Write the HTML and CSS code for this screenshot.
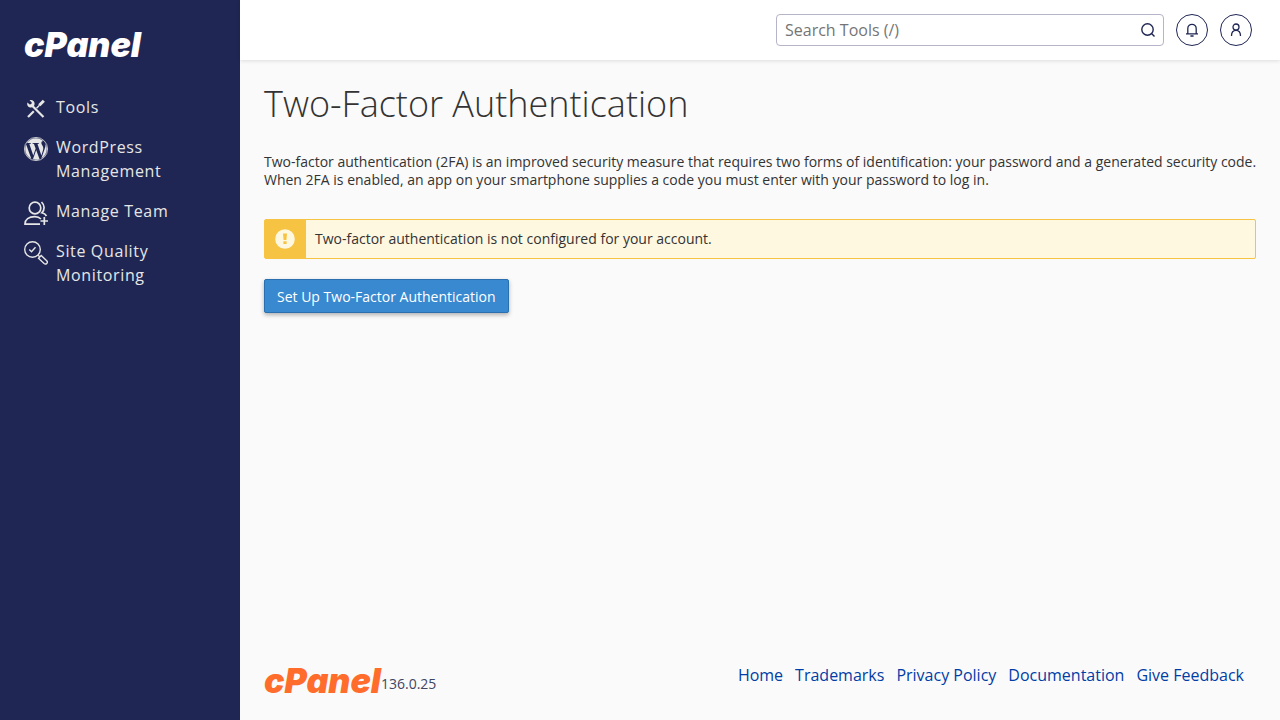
FILE: index.html
```html
<!DOCTYPE html>
<html lang="en">
  <head>
    <meta charset="UTF-8" />
    <meta name="viewport" content="width=device-width, initial-scale=1.0" />
    <title>Two-Factor Authentication</title>
    <link rel="stylesheet" href="styles.css">
  </head>
  <body>
    <aside class="sidebar">
      <a class="logo" href="#">cPanel</a>
      <nav class="nav">
        <a class="nav-item" href="#">
          <svg class="nav-icon" viewBox="0 0 24 24" fill="none" stroke="currentColor" aria-hidden="true">
            <path d="M8.500 9L19.500 20" stroke-width="2.200" />
            <path d="M5.600 3.200l2.200 2.300-.4 1.500-1.700.6-2.300-2.200c-.8 2.800.8 5 3.400 5 2.400 0 4-1.800 3.800-4-.2-2.400-2.400-4-5-3.200z" fill="currentColor" stroke="none" />
            <path d="M19.800 3.800L15.300 8.300" stroke-width="3" />
            <path d="M15.500 8.200L12.500 11.200" stroke-width="1.400" />
            <path d="M9.800 14.200L4 20" stroke-width="2.200" />
          </svg>
          <span>Tools</span>
        </a>
        <a class="nav-item" href="#">
          <svg class="nav-icon" viewBox="0 0 24 24" fill="currentColor" aria-hidden="true">
            <circle cx="12" cy="12" r="11.600" fill="none" stroke="currentColor" stroke-width=".8" />
            <path d="M21.469 6.825c.84 1.537 1.318 3.3 1.318 5.175 0 3.979-2.156 7.456-5.363 9.325l3.295-9.527c.615-1.54.82-2.771.82-3.864 0-.405-.026-.78-.07-1.11m-7.981.105c.647-.03 1.232-.105 1.232-.105.582-.075.514-.93-.067-.899 0 0-1.755.135-2.88.135-1.064 0-2.85-.15-2.85-.15-.585-.03-.661.855-.075.885 0 0 .54.061 1.125.09l1.68 4.605-2.37 7.08L5.354 6.9c.649-.03 1.234-.1 1.234-.1.585-.075.516-.93-.065-.896 0 0-1.746.138-2.874.138-.2 0-.438-.008-.69-.015C4.911 3.15 8.235 1.215 12 1.215c2.809 0 5.365 1.072 7.286 2.833-.046-.003-.091-.009-.141-.009-1.06 0-1.812.923-1.812 1.914 0 .89.513 1.643 1.06 2.531.411.72.89 1.643.89 2.977 0 .915-.354 1.994-.821 3.479l-1.075 3.585-3.9-11.61zM12 22.784c-1.059 0-2.081-.153-3.048-.437l3.237-9.406 3.315 9.087c.024.053.05.101.078.149-1.12.393-2.325.609-3.582.609M1.211 12c0-1.564.336-3.05.935-4.39L7.29 21.709C3.694 19.96 1.212 16.271 1.211 12" />
          </svg>
          <span>WordPress Management</span>
        </a>
        <a class="nav-item" href="#">
          <svg class="nav-icon" viewBox="0 0 24 24" fill="none" stroke="currentColor" stroke-width="1.700" aria-hidden="true">
            <circle cx="11" cy="7" r="5.800" />
            <path d="M17.500 1c3.300 3.200 3.500 7.700.3 10.800 2 .5 3.800 1.700 4.700 3.200" />
            <path d="M17 18c-1.600-1.600-3.600-2.300-6.200-2.300-6 0-9.800 3-9.800 7.400h15" />
            <path d="M20.300 16v8M16.500 20h7.500" />
          </svg>
          <span>Manage Team</span>
        </a>
        <a class="nav-item" href="#">
          <svg class="nav-icon" viewBox="0 0 24 24" fill="none" stroke="currentColor" stroke-width="1.400" aria-hidden="true">
            <circle cx="8.500" cy="8.500" r="7.800" />
            <path d="M5.300 8.600l2.200 2.200 4-4.600" />
            <path d="M14.200 14.200l1.500 1.500" />
            <path d="M14.500 17.200l2.700-2.700 5.500 5.300c1.800 1.800-.8 4.300-2.600 2.700z" />
          </svg>
          <span>Site Quality Monitoring</span>
        </a>
      </nav>
    </aside>
    <div class="page">
      <header class="topbar">
        <form class="search" role="search">
          <input class="search-input" type="text" placeholder="Search Tools (/)" aria-label="Search Tools" />
          <button class="search-btn" type="button" aria-label="Search">
            <svg viewBox="0 0 16 16" width="16" height="16" fill="none" stroke="currentColor" stroke-width="1.400">
              <circle cx="7.500" cy="7.500" r="5.700" />
              <path d="M11.500 11.500l3 3" />
            </svg>
          </button>
        </form>
        <button class="round-btn" type="button" aria-label="Notifications">
          <svg viewBox="0 0 16 16" width="16" height="16" fill="none" stroke="currentColor" stroke-width="1.300">
            <path d="M2 11.800h12M3.800 11.800V6.500a4.200 4.200 0 0 1 8.400 0v5.300M6.400 14h3.200" />
          </svg>
        </button>
        <button class="round-btn" type="button" aria-label="Account">
          <svg viewBox="0 0 16 16" width="16" height="16" fill="none" stroke="currentColor" stroke-width="1.300">
            <circle cx="8" cy="5" r="3" />
            <path d="M3.500 14c0-3.700 1.800-5.600 4.500-5.600s4.500 1.900 4.500 5.600" />
          </svg>
        </button>
      </header>
      <main class="content">
        <h1 class="title">Two-Factor Authentication</h1>
        <p class="desc">Two-factor authentication (2FA) is an improved security measure that requires two forms of identification: your password and a generated security code. When 2FA is enabled, an app on your smartphone supplies a code you must enter with your password to log in.</p>
        <div class="alert">
          <div class="alert-icon">
            <svg viewBox="0 0 20 20" width="20" height="20" aria-hidden="true">
              <circle cx="10" cy="10" r="9.800" fill="#fff8e1" />
              <path d="M8 4.500h4l-.6 6.500H8.600zM8.400 12.300h3.200v2.700H8.400z" fill="#f7c343" />
            </svg>
          </div>
          <div class="alert-text">Two-factor authentication is not configured for your account.</div>
        </div>
        <button class="btn" type="button">Set Up Two-Factor Authentication</button>
      </main>
      <footer class="footer">
        <div class="brand">
          <a class="logo logo-orange" href="#">cPanel</a>
          <span class="version">136.0.25</span>
        </div>
        <nav class="links">
          <a href="#">Home</a>
          <a href="#">Trademarks</a>
          <a href="#">Privacy Policy</a>
          <a href="#">Documentation</a>
          <a href="#">Give Feedback</a>
        </nav>
      </footer>
    </div>
  </body>
</html>
```
FILE: styles.css
```css
* {
  box-sizing: border-box;
}
body {
  margin: 0;
  min-height: 100vh;
  display: flex;
  background-color: #fafafa;
  color: #333;
  font-family: "Open Sans", "Noto Sans", sans-serif;
  font-size: 14px;
}
a {
  text-decoration: none;
}
.sidebar {
  flex: 0 0 240px;
  padding: 24px;
  background-color: #1f2653;
}
.logo {
  display: block;
  color: #fff;
  font-family: Inter, sans-serif;
  font-size: 34px;
  font-style: italic;
  font-weight: 900;
  line-height: 42px;
}
.logo-orange {
  color: #ff6c2c;
}
.nav {
  display: flex;
  flex-direction: column;
  gap: 16px;
  width: 160px;
  margin-top: 29px;
}
.nav-item {
  display: flex;
  gap: 8px;
  color: #e6e6e6;
  font-size: 16px;
  line-height: 24px;
  letter-spacing: 0.04em;
}
.nav-icon {
  flex: none;
  width: 24px;
  height: 24px;
  margin: 2px 0 -2px;
}
.page {
  flex: 1;
  min-width: 0;
  display: flex;
  flex-direction: column;
}
.topbar {
  display: flex;
  justify-content: flex-end;
  align-items: center;
  gap: 12px;
  height: 60px;
  padding: 0 28px;
  background-color: #fff;
  box-shadow: 0 1px 4px rgba(0, 0, 0, 0.12);
}
.search {
  display: flex;
  width: 388px;
  height: 32px;
  border: 1px solid #b5b4c8;
  border-radius: 4px;
}
.search-input {
  flex: 1;
  min-width: 0;
  padding: 0 8px;
  border: none;
  outline: none;
  background: none;
  font-family: inherit;
  font-size: 16px;
}
.search-input::placeholder {
  color: #757575;
}
.search-btn {
  display: flex;
  align-items: center;
  padding: 0 7px;
  border: none;
  background: none;
  color: #1f2653;
}
.round-btn {
  display: flex;
  align-items: center;
  justify-content: center;
  width: 32px;
  height: 32px;
  padding: 0;
  border: 1px solid #1f2653;
  border-radius: 50%;
  background: none;
  color: #1f2653;
}
.content {
  flex: 1;
  padding: 24px;
}
.title {
  margin: 0 0 29px;
  font-size: 36px;
  font-weight: 300;
  line-height: 40px;
}
.desc {
  margin: 0 -12px 30px 0;
  line-height: 18px;
}
.alert {
  display: flex;
  height: 40px;
  margin-bottom: 20px;
  border: 1px solid #f7c343;
  border-radius: 2px;
  background-color: #fff8e1;
}
.alert-icon {
  display: flex;
  align-items: center;
  justify-content: center;
  width: 41px;
  padding-right: 2px;
  background-color: #f7c343;
}
.alert-text {
  padding-left: 9px;
  line-height: 38px;
}
.btn {
  height: 34px;
  padding: 0 12px;
  border: 1px solid #2a6fb0;
  border-radius: 2px;
  background-color: #3889d0;
  box-shadow: 0 2px 4px rgba(0, 0, 0, 0.3);
  color: #fff;
  font-family: inherit;
  font-size: 14px;
}
.footer {
  display: flex;
  justify-content: space-between;
  align-items: flex-start;
  padding: 0 36px 18px 24px;
}
.brand {
  display: flex;
  align-items: flex-end;
}
.version {
  color: #3d4663;
  line-height: 36px;
}
.links {
  display: flex;
  gap: 12px;
  padding-top: 4px;
  font-size: 16px;
  line-height: 22px;
}
.links a {
  color: #003da6;
}
```
